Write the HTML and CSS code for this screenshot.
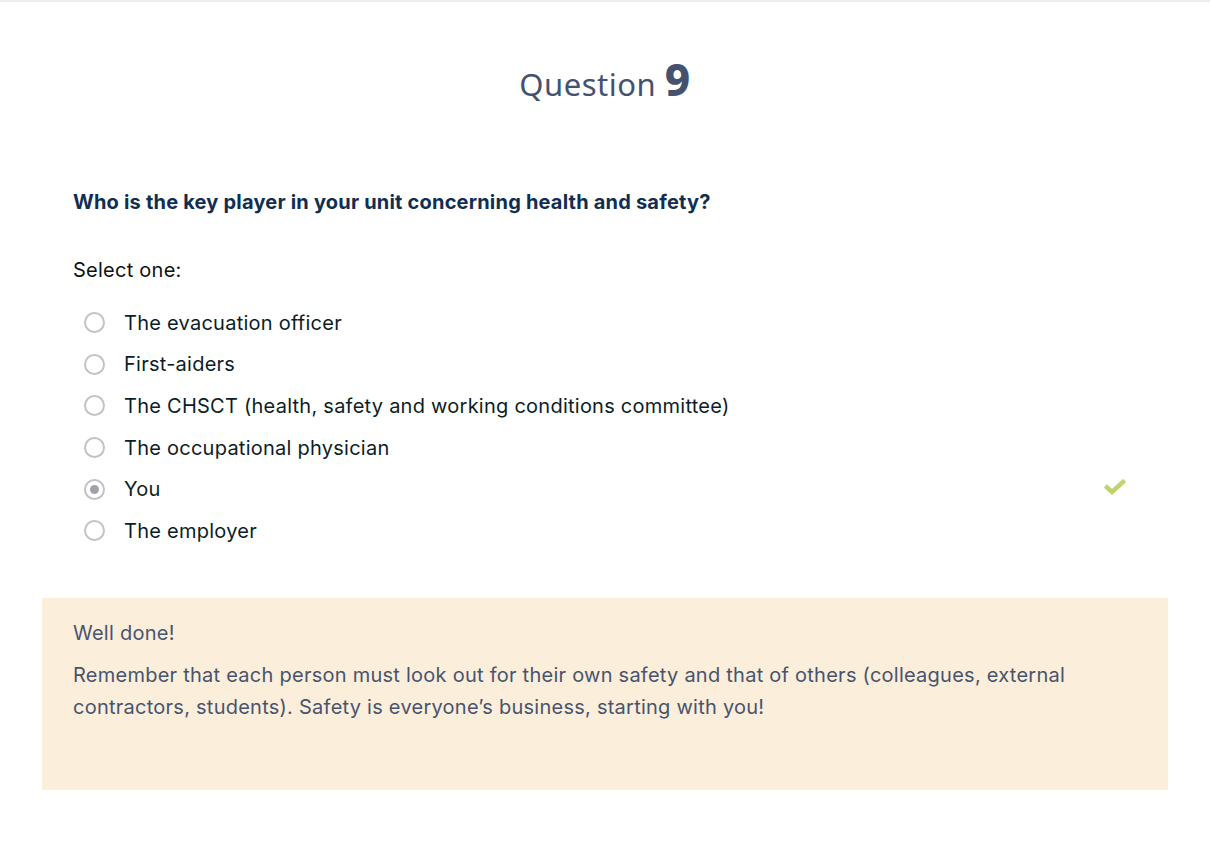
FILE: index.html
```html
<!DOCTYPE html>
<html lang="en">
<head>
<meta charset="utf-8">
<link rel="stylesheet" href="styles.css">
</head>
<body>
<div class="page">
  <h1 class="title">Question <strong>9</strong></h1>
  <div class="content">
    <p class="qtext">Who is the key player in your unit concerning health and safety?</p>
    <p class="prompt">Select one:</p>
    <ul class="answers">
      <li class="answer"><span class="radio"></span><span class="label">The evacuation officer</span></li>
      <li class="answer"><span class="radio"></span><span class="label">First-aiders</span></li>
      <li class="answer"><span class="radio"></span><span class="label">The CHSCT (health, safety and working conditions committee)</span></li>
      <li class="answer"><span class="radio"></span><span class="label">The occupational physician</span></li>
      <li class="answer correct"><span class="radio checked"></span><span class="label">You</span>
        <svg class="tick" width="22" height="16" viewBox="0 0 22 16"><path d="M3 8.5 L8 13 L19 3" fill="none" stroke="#bfd46a" stroke-width="4.5" stroke-linecap="square"/></svg>
      </li>
      <li class="answer"><span class="radio"></span><span class="label">The employer</span></li>
    </ul>
  </div>
  <div class="feedback">
    <p class="fb-head">Well done!</p>
    <p class="fb-text">Remember that each person must look out for their own safety and that of others (colleagues, external contractors, students). Safety is everyone’s business, starting with you!</p>
  </div>
</div>
</body>
</html>
```

FILE: styles.css
```css
* { box-sizing: border-box; }
html, body { margin: 0; padding: 0; background: #fff; }
body {
  border-top: 2px solid #e9eef0;
  font-family: "Inter", "Noto Sans", sans-serif;
}
.page {
  width: 1126px;
  margin: 0 auto;
}
.title {
  margin: 0;
  padding-top: 53px;
  text-align: center;
  font-family: "Noto Sans", sans-serif;
  font-weight: 400;
  font-size: 31px;
  line-height: 48px;
  color: #44526e;
  letter-spacing: 0.5px;
}
.title strong {
  font-size: 44px;
  font-weight: 800;
}
.content {
  padding: 0 31px;
}
.qtext {
  margin: 82px 0 0;
  font-size: 20px;
  font-weight: 700;
  line-height: 24px;
  color: #102e52;
  letter-spacing: 0.2px;
}
.prompt {
  margin: 44px 0 0;
  font-size: 20px;
  line-height: 24px;
  color: #111;
  letter-spacing: 0.25px;
}
.answers {
  list-style: none;
  margin: 20px 0 0;
  padding: 0 0 0 11px;
}
.answer {
  display: flex;
  align-items: center;
  height: 41.6px;
  font-size: 20px;
  letter-spacing: 0.25px;
  color: #0c1d26;
}
.radio {
  width: 21px;
  height: 21px;
  border: 2px solid #c2c3c9;
  border-radius: 50%;
  margin-right: 19px;
  flex: none;
  display: flex;
  align-items: center;
  justify-content: center;
}
.radio.checked::after {
  content: "";
  width: 9px;
  height: 9px;
  border-radius: 50%;
  background: #a1a1ab;
}
.answer.correct { position: relative; }
.tick {
  position: absolute;
  left: 1020px;
  top: 11px;
}
.feedback {
  margin-top: 46px;
  background: #fbeedb;
  padding: 21px 31px 67px;
  color: #48546e;
  font-size: 20px;
  letter-spacing: 0.25px;
}
.fb-head {
  margin: 0;
  line-height: 28px;
}
.fb-text {
  margin: 12px 0 0;
  line-height: 32px;
}
```
